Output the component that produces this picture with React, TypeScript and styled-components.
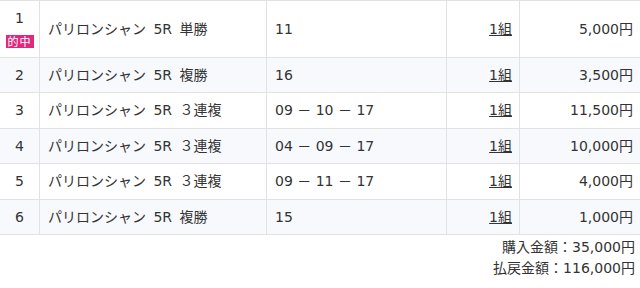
import React from "react";
import styled, { createGlobalStyle } from "styled-components";

const Global = createGlobalStyle`
  html, body { margin: 0; padding: 0; background: #fff; }
  body {
    font-family: "DejaVu Sans", "Noto Sans CJK JP", sans-serif;
    color: #333;
  }
`;

const Table = styled.table`
  width: 641px;
  border-collapse: collapse;
  table-layout: fixed;
  font-size: 14px;
  margin-left: -1px;
`;

const Row = styled.tr<{ $alt: boolean }>`
  background: ${(p) => (p.$alt ? "#f7f9fd" : "#fff")};
`;

const Cell = styled.td<{ $align?: "left" | "center" | "right"; $wide?: boolean }>`
  border: 1px solid #e2e2e2;
  padding: 6px 7px 6px 8px;
  line-height: 22.4px;
  text-align: ${(p) => p.$align ?? "left"};
  vertical-align: middle;
  white-space: nowrap;
  word-spacing: ${(p) => (p.$wide ? "3px" : "0")};
`;

const NumCell = styled(Cell)`
  padding: 6px 0;
`;

const NumStack = styled.div`
  display: flex;
  flex-direction: column;
  align-items: center;
  line-height: 22.4px;
`;

const Badge = styled.span`
  display: inline-block;
  background: #e0287c;
  color: #fff;
  font-family: "Noto Sans CJK JP", sans-serif;
  font-size: 11px;
  line-height: 13px;
  padding: 0 2px;
  letter-spacing: 1px;
  margin: 5.6px 0 3px;
`;

const Link = styled.a`
  color: #333;
  text-decoration: underline;
  cursor: pointer;
`;

const Totals = styled.div`
  display: flex;
  flex-direction: column;
  align-items: flex-end;
  padding: 2px 5px 0 0;
  font-size: 14px;
  line-height: 21px;
`;

type Bet = { no: number; race: string; nums: string; hit?: boolean; amount: string };

const bets: Bet[] = [
  { no: 1, race: "パリロンシャン 5R 単勝", nums: "11", hit: true, amount: "5,000円" },
  { no: 2, race: "パリロンシャン 5R 複勝", nums: "16", amount: "3,500円" },
  { no: 3, race: "パリロンシャン 5R ３連複", nums: "09 － 10 － 17", amount: "11,500円" },
  { no: 4, race: "パリロンシャン 5R ３連複", nums: "04 － 09 － 17", amount: "10,000円" },
  { no: 5, race: "パリロンシャン 5R ３連複", nums: "09 － 11 － 17", amount: "4,000円" },
  { no: 6, race: "パリロンシャン 5R 複勝", nums: "15", amount: "1,000円" },
];

export default function App() {
  return (
    <>
      <Global />
      <Table>
        <colgroup>
          <col style={{ width: 40 }} />
          <col style={{ width: 227 }} />
          <col style={{ width: 180 }} />
          <col style={{ width: 73 }} />
          <col style={{ width: 121 }} />
        </colgroup>
        <tbody>
          {bets.map((b, i) => (
            <Row key={b.no} $alt={i % 2 === 1}>
              <NumCell $align="center">
                <NumStack>
                  <span>{b.no}</span>
                  {b.hit && <Badge>的中</Badge>}
                </NumStack>
              </NumCell>
              <Cell $wide>{b.race}</Cell>
              <Cell>{b.nums}</Cell>
              <Cell $align="right">
                <Link>1組</Link>
              </Cell>
              <Cell $align="right">{b.amount}</Cell>
            </Row>
          ))}
        </tbody>
      </Table>
      <Totals>
        <div>購入金額：35,000円</div>
        <div>払戻金額：116,000円</div>
      </Totals>
    </>
  );
}
